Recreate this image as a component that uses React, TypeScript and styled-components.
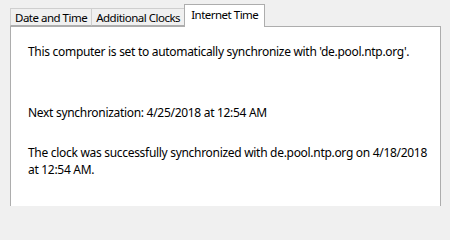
import React from "react";
import styled, { createGlobalStyle } from "styled-components";

const Global = createGlobalStyle`
  html, body {
    margin: 0;
    padding: 0;
    height: 206px;
    overflow: hidden;
    background: #f0f0f0;
    font-family: "Noto Sans", "Open Sans", sans-serif;
    font-size: 12px;
    color: #000;
  }
`;

const Dialog = styled.div`
  width: 450px;
  height: 206px;
  overflow: hidden;
  padding: 4px 0 0 10px;
  box-sizing: border-box;
  background: #f0f0f0;
`;

const TabStrip = styled.div`
  display: flex;
  align-items: flex-end;
  height: 22px;
  position: relative;
  z-index: 1;
`;

const Tab = styled.div<{ $active?: boolean }>`
  box-sizing: border-box;
  height: ${(p) => (p.$active ? "23px" : "18px")};
  margin-bottom: ${(p) => (p.$active ? "-1px" : "0")};
  padding: ${(p) => (p.$active ? "0 6px 3px" : "0 4px")};
  display: flex;
  align-items: center;
  border: 1px solid ${(p) => (p.$active ? "#adadad" : "#cfcfcf")};
  border-bottom: ${(p) => (p.$active ? "none" : "1px solid #adadad")};
  margin-right: -1px;
  background: ${(p) => (p.$active ? "#fff" : "#f0f0f0")};
  white-space: nowrap;
  font-size: 11.5px;
  letter-spacing: -0.5px;
  position: relative;
  z-index: ${(p) => (p.$active ? 2 : 1)};
`;

const Panel = styled.div`
  width: 431px;
  height: 200px;
  box-sizing: border-box;
  background: #fff;
  border: 1px solid #adadad;
  padding: 16px 0 0 17px;
`;

const Line = styled.p<{ $gap?: number }>`
  margin: ${(p) => p.$gap ?? 0}px 0 0;
  line-height: 17px;
  letter-spacing: -0.3px;
  width: 405px;
`;

export default function App() {
  return (
    <>
      <Global />
      <Dialog>
        <TabStrip>
          <Tab>Date and Time</Tab>
          <Tab>Additional Clocks</Tab>
          <Tab $active>Internet Time</Tab>
        </TabStrip>
        <Panel>
          <Line>This computer is set to automatically synchronize with 'de.pool.ntp.org'.</Line>
          <Line $gap={44}>Next synchronization: 4/25/2018 at 12:54 AM</Line>
          <Line $gap={23}>
            The clock was successfully synchronized with de.pool.ntp.org on 4/18/2018 at 12:54 AM.
          </Line>
        </Panel>
      </Dialog>
    </>
  );
}
